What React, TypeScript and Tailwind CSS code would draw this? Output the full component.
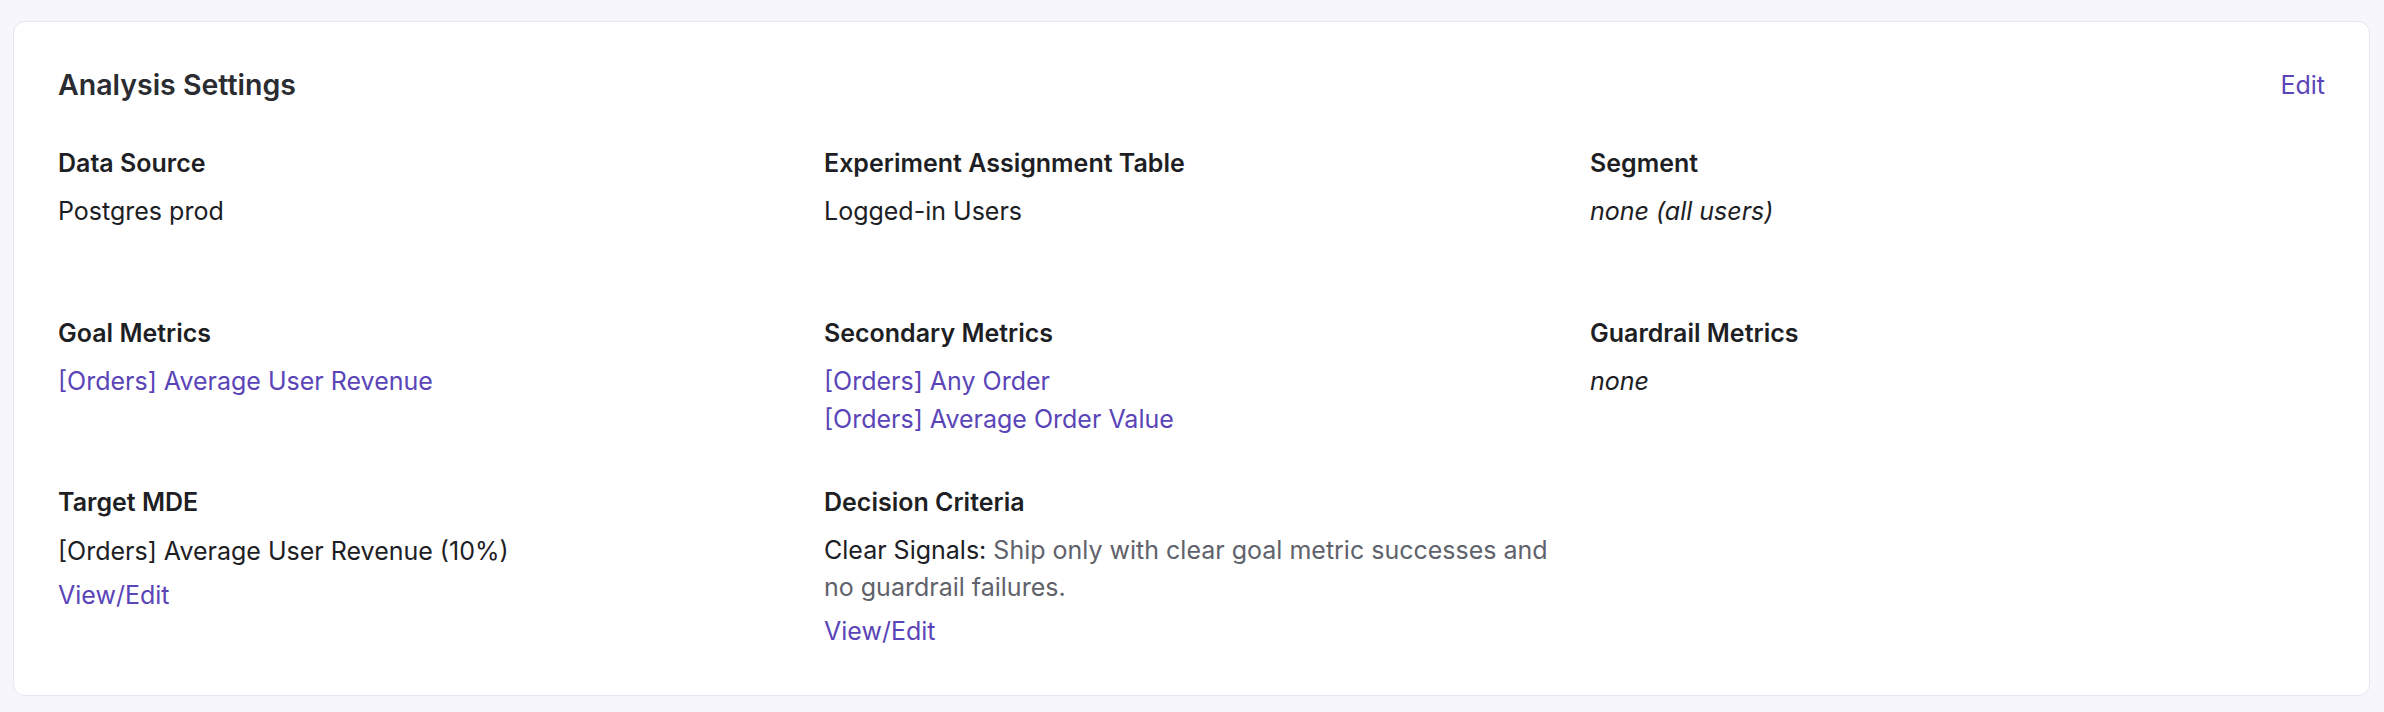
const link = 'text-[#5a45b8] hover:underline cursor-pointer';

function Label({ children }: { children: React.ReactNode }) {
  return <div className="text-[25px] leading-[36px] font-semibold text-[#1e1f24]">{children}</div>;
}

export default function App() {
  return (
    <div className="min-h-[712px] bg-[#f7f6fd] pt-[21px] pl-[13px] pr-[14px] pb-[18px] font-['Inter',sans-serif]">
      <div className="rounded-[12px] border border-[#e6e5f2] bg-white px-[44px] pt-[43px] pb-[45px]">
        <div className="flex items-start justify-between">
          <h2 className="text-[28.5px] leading-[40px] font-semibold text-[#2a2c31]">Analysis Settings</h2>
          <a className={`${link} text-[25px] leading-[40px]`}>Edit</a>
        </div>

        <div className="mt-[40px] grid grid-cols-3 gap-x-[31px] text-[25px] leading-[38px] text-[#1c2024]">
          {/* row 1 */}
          <div className="pb-[85px]">
            <Label>Data Source</Label>
            <div className="mt-[11px]">Postgres prod</div>
          </div>
          <div className="pb-[85px]">
            <Label>Experiment Assignment Table</Label>
            <div className="mt-[11px]">Logged-in Users</div>
          </div>
          <div className="pb-[85px]">
            <Label>Segment</Label>
            <div className="mt-[11px] italic">none (all users)</div>
          </div>

          {/* row 2 */}
          <div className="pb-[46px]">
            <Label>Goal Metrics</Label>
            <div className="mt-[11px]">
              <a className={link}>[Orders] Average User Revenue</a>
            </div>
          </div>
          <div className="pb-[46px]">
            <Label>Secondary Metrics</Label>
            <div className="mt-[11px] flex flex-col">
              <a className={link}>[Orders] Any Order</a>
              <a className={link}>[Orders] Average Order Value</a>
            </div>
          </div>
          <div className="pb-[46px]">
            <Label>Guardrail Metrics</Label>
            <div className="mt-[11px] italic">none</div>
          </div>

          {/* row 3 */}
          <div>
            <Label>Target MDE</Label>
            <div className="mt-[12px]">[Orders] Average User Revenue (10%)</div>
            <div className="mt-[6px]">
              <a className={link}>View/Edit</a>
            </div>
          </div>
          <div>
            <Label>Decision Criteria</Label>
            <div className="mt-[12px] leading-[37px] text-[#60626b]">
              <span className="text-[#1c2024]">Clear Signals:</span> Ship only with clear goal metric successes and no
              guardrail failures.
            </div>
            <div className="mt-[6px]">
              <a className={link}>View/Edit</a>
            </div>
          </div>
          <div />
        </div>
      </div>
    </div>
  );
}
